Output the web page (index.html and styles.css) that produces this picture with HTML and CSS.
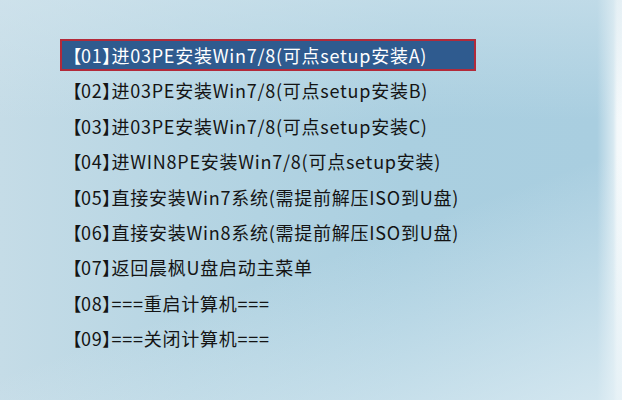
FILE: index.html
```html
<!DOCTYPE html>
<html lang="zh-CN">
<head>
<meta charset="utf-8">
<title>菜单</title>
<link rel="stylesheet" href="styles.css">
</head>
<body>
<div class="screen">
  <ul class="menu">
    <li class="item selected"><span class="br">【</span>01<span class="br">】</span>进03PE安装Win7/8(可点setup安装A)</li>
    <li class="item"><span class="br">【</span>02<span class="br">】</span>进03PE安装Win7/8(可点setup安装B)</li>
    <li class="item"><span class="br">【</span>03<span class="br">】</span>进03PE安装Win7/8(可点setup安装C)</li>
    <li class="item"><span class="br">【</span>04<span class="br">】</span>进WIN8PE安装Win7/8(可点setup安装)</li>
    <li class="item"><span class="br">【</span>05<span class="br">】</span>直接安装Win7系统(需提前解压ISO到U盘)</li>
    <li class="item"><span class="br">【</span>06<span class="br">】</span>直接安装Win8系统(需提前解压ISO到U盘)</li>
    <li class="item"><span class="br">【</span>07<span class="br">】</span>返回晨枫U盘启动主菜单</li>
    <li class="item"><span class="br">【</span>08<span class="br">】</span>===重启计算机===</li>
    <li class="item"><span class="br">【</span>09<span class="br">】</span>===关闭计算机===</li>
  </ul>
</div>
</body>
</html>
```
FILE: styles.css
```css
html, body {
  margin: 0;
  padding: 0;
}
body {
  width: 622px;
  height: 400px;
  overflow: hidden;
}
.screen {
  width: 622px;
  height: 400px;
  box-sizing: border-box;
  padding: 39px 0 0 60px;
  background:
    linear-gradient(160deg, rgba(255,255,255,0) 60%, rgba(226,239,245,0.75) 100%),
    linear-gradient(180deg, rgba(214,231,239,0.5) 0%, rgba(214,231,239,0) 30%),
    linear-gradient(90deg, #c5dce7 0%, #b6d5e3 30%, #aacfe0 65%, #a9cee0 96%, #d8e9f1 98.6%, #f3f8fa 99.2%, #f6fafc 100%);
  font-family: "Noto Sans CJK SC", "Noto Sans", sans-serif;
}
.menu {
  list-style: none;
  margin: 0;
  padding: 0;
  display: flex;
  flex-direction: column;
  gap: 3.4px;
}
.item {
  box-sizing: border-box;
  width: 416px;
  height: 32px;
  line-height: 28px;
  padding: 0 0 0 10px;
  border: 2px solid transparent;
  font-size: 18px;
  letter-spacing: 0.75px;
  color: #141414;
  white-space: nowrap;
}
.br {
  font-feature-settings: "palt";
  letter-spacing: 0;
}
.item.selected {
  background: #2f5b8f;
  border-color: #b22a3a;
  color: #ffffff;
}
```
